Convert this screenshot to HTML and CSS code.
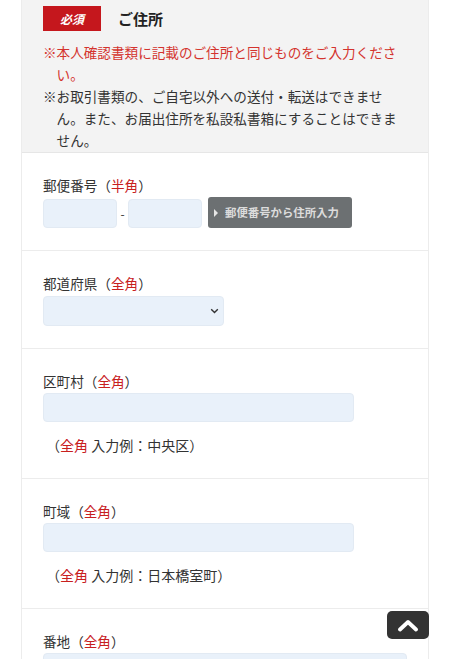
FILE: index.html
```html
<!DOCTYPE html>
<html lang="ja">
<head>
<meta charset="utf-8">
<link rel="stylesheet" href="styles.css">
</head>
<body>
<div class="form">
  <div class="head">
    <div class="title-row">
      <span class="badge">必須</span>
      <span class="title">ご住所</span>
    </div>
    <p class="note red">※本人確認書類に記載のご住所と同じものをご入力ください。</p>
    <p class="note">※お取引書類の、ご自宅以外への送付・転送はできません。また、お届出住所を私設私書箱にすることはできません。</p>
  </div>

  <div class="row">
    <div class="label">郵便番号（<span class="r">半角</span>）</div>
    <div class="zip">
      <span class="input zip-in"></span>
      <span class="dash">-</span>
      <span class="input zip-in"></span>
      <span class="zip-btn"><span class="tri"></span>郵便番号から住所入力</span>
    </div>
  </div>

  <div class="row">
    <div class="label">都道府県（<span class="r">全角</span>）</div>
    <div class="input select">
      <svg width="9" height="6" viewBox="0 0 9 6"><path d="M1.2 1.2l3.3 3.3 3.3-3.3" fill="none" stroke="#333" stroke-width="1.4"/></svg>
    </div>
  </div>

  <div class="row">
    <div class="label">区町村（<span class="r">全角</span>）</div>
    <div class="input wide"></div>
    <div class="hint">（<span class="r">全角</span> 入力例：中央区）</div>
  </div>

  <div class="row">
    <div class="label">町域（<span class="r">全角</span>）</div>
    <div class="input wide"></div>
    <div class="hint">（<span class="r">全角</span> 入力例：日本橋室町）</div>
  </div>

  <div class="row">
    <div class="label">番地（<span class="r">全角</span>）</div>
    <div class="input wider"></div>
  </div>
</div>

<a class="totop" href="#">
  <svg width="22" height="13" viewBox="0 0 22 13"><path d="M3 10.5L11 3l8 7.5" fill="none" stroke="#fff" stroke-width="3.8" stroke-linecap="round" stroke-linejoin="round"/></svg>
</a>
</body>
</html>
```

FILE: styles.css
```css
html, body {
  margin: 0;
  padding: 0;
  background: #fff;
}
body {
  font-family: "Noto Sans CJK JP", "Noto Sans", sans-serif;
  font-size: 13.6px;
  line-height: 22px;
  color: #333;
  height: 659px;
  overflow: hidden;
  text-spacing-trim: space-all;
}
.form {
  margin: 0 21px;
  border-left: 1px solid #ececec;
  border-right: 1px solid #ececec;
}
.head {
  background: #f3f3f3;
  padding: 6px 21px 1px;
  border-bottom: 1px solid #e6e6e6;
}
.title-row {
  display: flex;
  align-items: center;
  height: 25px;
  margin-bottom: 10px;
}
.badge {
  width: 58px;
  height: 25px;
  background: #c5171d;
  color: #fff;
  font-size: 12px;
  font-weight: bold;
  font-style: italic;
  display: flex;
  align-items: center;
  justify-content: center;
  line-height: 1;
}
.title {
  margin-left: 17px;
  font-size: 15px;
  font-weight: bold;
  color: #222;
}
.note {
  margin: 0;
  padding-left: 1em;
  text-indent: -1em;
}
.note.red {
  color: #d4332e;
}
.row {
  padding: 21px 21px 22px;
  border-bottom: 1px solid #ececec;
}
.label {
  line-height: 22px;
}
.r {
  color: #c8201e;
}
.input {
  display: block;
  box-sizing: border-box;
  height: 29px;
  margin-top: 1px;
  background: #e9f1fa;
  border: 1px solid #e2eaf3;
  border-radius: 4px;
}
.zip {
  display: flex;
  align-items: center;
  margin-top: 1px;
}
.zip-in {
  width: 74px;
  margin-top: 2px;
}
.dash {
  width: 11px;
  text-align: center;
  font-size: 12px;
  margin-top: 2px;
}
.zip-btn {
  margin-left: 6px;
  width: 144px;
  height: 31px;
  box-sizing: border-box;
  background: #6c7072;
  border-radius: 3px;
  color: #dcdcdc;
  font-size: 11.4px;
  font-weight: bold;
  display: flex;
  align-items: center;
  padding-left: 6px;
  line-height: 1;
  white-space: nowrap;
}
.tri {
  width: 0;
  height: 0;
  border-left: 4px solid #e6e6e6;
  border-top: 4px solid transparent;
  border-bottom: 4px solid transparent;
  margin-right: 7px;
}
.select {
  width: 181px;
  height: 30px;
  margin-top: 2px;
  display: flex;
  align-items: center;
  justify-content: flex-end;
  padding-right: 4px;
}
.wide {
  width: 311px;
}
.wider {
  width: 364px;
}
.hint {
  margin-top: 12px;
  margin-left: 3px;
  font-size: 14px;
}
.totop {
  position: fixed;
  right: 21px;
  bottom: 20px;
  width: 42px;
  height: 28px;
  background: #333;
  border-radius: 5px;
  display: flex;
  align-items: center;
  justify-content: center;
}
```
